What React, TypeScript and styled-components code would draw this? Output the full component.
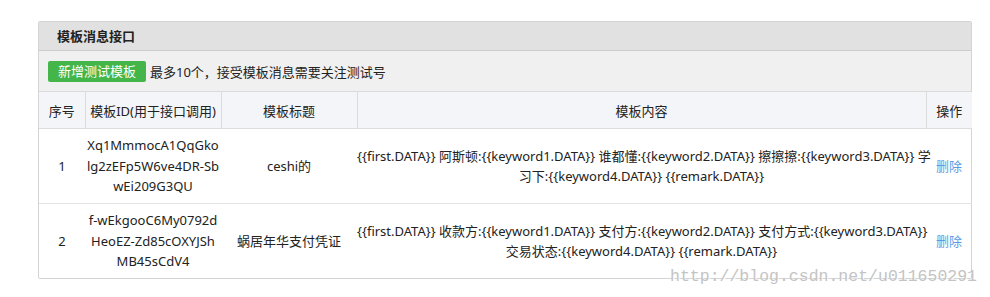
import styled, { createGlobalStyle } from "styled-components";

const GlobalStyle = createGlobalStyle`
  body {
    margin: 0;
    background: #fff;
    font-family: "Noto Sans", "Noto Sans CJK SC", sans-serif;
    color: #333;
  }
`;

type Template = {
  id: number;
  templateId: string[];
  title: string;
  content: string[];
};

const templates: Template[] = [
  {
    id: 1,
    templateId: ["Xq1MmmocA1QqGko", "lg2zEFp5W6ve4DR-Sb", "wEi209G3QU"],
    title: "ceshi的",
    content: [
      "{{first.DATA}} 阿斯顿:{{keyword1.DATA}} 谁都懂:{{keyword2.DATA}} 擦擦擦:{{keyword3.DATA}} 学",
      "习下:{{keyword4.DATA}} {{remark.DATA}}",
    ],
  },
  {
    id: 2,
    templateId: ["f-wEkgooC6My0792d", "HeoEZ-Zd85cOXYJSh", "MB45sCdV4"],
    title: "蜗居年华支付凭证",
    content: [
      "{{first.DATA}} 收款方:{{keyword1.DATA}} 支付方:{{keyword2.DATA}} 支付方式:{{keyword3.DATA}}",
      "交易状态:{{keyword4.DATA}} {{remark.DATA}}",
    ],
  },
];

const columns = [
  { label: "序号", width: 46 },
  { label: "模板ID(用于接口调用)", width: 136 },
  { label: "模板标题", width: 136 },
  { label: "模板内容", width: 569 },
  { label: "操作", width: 46 },
];

export default function App() {
  return (
    <Page>
      <GlobalStyle />
      <Panel>
        <Heading>模板消息接口</Heading>
        <Toolbar>
          <AddButton>新增测试模板</AddButton>
          <Hint>最多10个，接受模板消息需要关注测试号</Hint>
        </Toolbar>
        <Table>
          <colgroup>
            {columns.map((c) => (
              <col key={c.label} style={{ width: c.width }} />
            ))}
          </colgroup>
          <thead>
            <tr>
              {columns.map((c) => (
                <Th key={c.label}>{c.label}</Th>
              ))}
            </tr>
          </thead>
          <tbody>
            {templates.map((t) => (
              <Row key={t.id}>
                <Td>{t.id}</Td>
                <Td>
                  {t.templateId.map((line) => (
                    <Line key={line}>{line}</Line>
                  ))}
                </Td>
                <Td>{t.title}</Td>
                <Td>
                  {t.content.map((line) => (
                    <Line key={line}>{line}</Line>
                  ))}
                </Td>
                <Td>
                  <DeleteLink>删除</DeleteLink>
                </Td>
              </Row>
            ))}
          </tbody>
        </Table>
      </Panel>
      <Watermark>http://blog.csdn.net/u011650291</Watermark>
    </Page>
  );
}

const Page = styled.div`
  position: relative;
  width: 990px;
  height: 297px;
  padding: 21px 0 0 38px;
  box-sizing: border-box;
`;

const Panel = styled.div`
  width: 934px;
  box-sizing: border-box;
  border: 1px solid #d4d4d4;
  border-radius: 2px;
`;

const Heading = styled.div`
  height: 28px;
  line-height: 28px;
  padding-left: 18px;
  background: #e1e1e1;
  border-bottom: 1px solid #cdcdcd;
  font-size: 13px;
  font-weight: bold;
  color: #222;
`;

const Toolbar = styled.div`
  display: flex;
  align-items: center;
  gap: 4px;
  height: 40px;
  padding: 0 9px;
  background: #f0f0f0;
  border-bottom: 1px solid #dadada;
`;

const AddButton = styled.button`
  height: 21px;
  width: 98px;
  padding: 0;
  border: none;
  border-radius: 2px;
  background: #44b549;
  color: #fff;
  font-family: inherit;
  font-size: 13px;
  line-height: 21px;
  cursor: pointer;
`;

const Hint = styled.span`
  font-size: 13px;
  color: #222;
`;

const Table = styled.table`
  width: 100%;
  table-layout: fixed;
  border-collapse: collapse;
  font-size: 13px;
`;

const Th = styled.th`
  height: 36px;
  padding: 0;
  background: #f4f5f9;
  border-bottom: 1px solid #dcdcdc;
  border-right: 1px solid #dcdcdc;
  font-weight: normal;
  color: #222;
  text-align: center;

  &:last-child {
    border-right: none;
  }
`;

const Row = styled.tr`
  & + & td {
    border-top: 1px solid #e4e4e4;
  }
`;

const Td = styled.td`
  height: 74px;
  padding: 0;
  text-align: center;
  vertical-align: middle;
  line-height: 20.5px;
  color: #222;
  white-space: nowrap;
`;

const Line = styled.div``;

const DeleteLink = styled.a`
  color: #5b9be6;
  cursor: pointer;
`;

const Watermark = styled.div`
  position: absolute;
  right: 13px;
  bottom: 11px;
  font-family: "Liberation Mono", monospace;
  font-size: 16.5px;
  color: #c4c4c4;
  text-shadow: 1px 1px 0 #fff;
  pointer-events: none;
`;
